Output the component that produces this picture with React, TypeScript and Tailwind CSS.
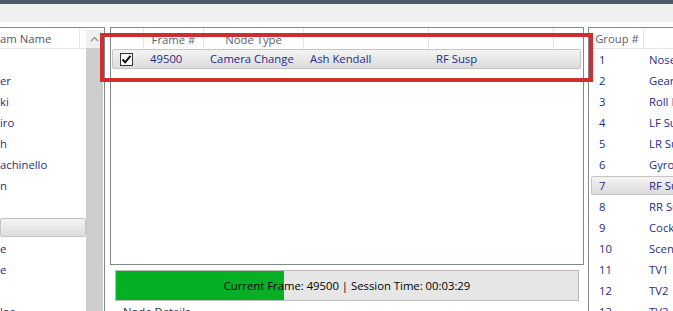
import React from "react";

const teamRows = ["", "er", "ki", "iro", "h", "achinello", "n", "", "", "e", "e", "", "los"];
const selectedTeam = 8;

const groups = [
  ["1", "Nose Cam"],
  ["2", "Gearbox"],
  ["3", "Roll Hoop"],
  ["4", "LF Susp"],
  ["5", "LR Susp"],
  ["6", "Gyro"],
  ["7", "RF Susp"],
  ["8", "RR Susp"],
  ["9", "Cockpit"],
  ["10", "Scenic"],
  ["11", "TV1"],
  ["12", "TV2"],
  ["13", "TV3"],
];
const selectedGroup = 6;

const progress = 36.3; // percent of bar

const selBg = "bg-gradient-to-b from-[#f4f4f4] to-[#dcdcdc] border border-[#c4c4c4] rounded-[2px]";

function CheckBox() {
  return (
    <div className="w-[13px] h-[13px] border border-[#333] bg-white flex items-center justify-center">
      <svg width="11" height="11" viewBox="0 0 11 11">
        <path d="M1.5 5.5 L4.2 8.3 L9.5 1.8" fill="none" stroke="#111" strokeWidth="2" />
      </svg>
    </div>
  );
}

export default function App() {
  return (
    <div className="w-[673px] h-[311px] overflow-hidden bg-white relative font-['Open_Sans',sans-serif] text-[11.3px]">
      <div className="h-[4px] bg-[#4e5968]" />
      <div className="h-[18px] bg-[#f0f0f0]" />
      <div className="h-[5px]" />

      <div className="flex h-[284px]">
        {/* team list */}
        <div className="w-[105px] shrink-0 border-t border-r border-[#828790] pt-px pr-px flex">
          <div className="w-[86px] flex flex-col overflow-hidden">
            <div className="h-[20px] shrink-0 flex border-b border-[#e5e5e5]">
              <div className="w-[80px] pt-[2px] border-r border-[#e5e5e5] flex items-center text-[#4f5666] whitespace-nowrap">
                am Name
              </div>
            </div>
            {teamRows.map((name, i) => (
              <div key={i} className="h-[21px] shrink-0 flex items-center">
                {i === selectedTeam ? (
                  <div className={`w-full h-[19px] ${selBg}`} />
                ) : (
                  <span className="pt-[2px] text-[#1f2d86] whitespace-nowrap">{name}</span>
                )}
              </div>
            ))}
          </div>
          <div className="w-[17px] flex flex-col">
            <div className="h-[18px] mt-px bg-[#f0f0f0] flex items-center justify-center">
              <svg width="9" height="6" viewBox="0 0 9 6">
                <path d="M1 5 L4.5 1.5 L8 5" fill="none" stroke="#8a8a8a" strokeWidth="1.2" />
              </svg>
            </div>
            <div className="flex-1 bg-[#cdcdcd]" />
          </div>
        </div>

        <div className="w-[5px] shrink-0" />

        {/* middle: nodes + progress */}
        <div className="w-[474px] shrink-0 flex flex-col overflow-hidden">
          <div className="h-[238px] shrink-0 border border-[#828790] flex flex-col">
            <div className="h-[21px] flex text-[#5b6272] whitespace-nowrap">
              <div className="w-[33px] border-r border-[#e5e5e5]" />
              <div className="w-[60px] pt-[3px] border-r border-[#e5e5e5] flex items-center justify-center">Frame #</div>
              <div className="w-[100px] pt-[3px] border-r border-[#e5e5e5] flex items-center justify-center">Node Type</div>
              <div className="w-[125px] border-r border-[#e5e5e5]" />
              <div className="w-[125px] border-r border-[#e5e5e5]" />
            </div>
            <div className={`h-[20px] ml-px mr-[2px] flex items-center text-[#1f2d86] whitespace-nowrap ${selBg}`}>
              <div className="w-[32px] pl-[7px]">
                <CheckBox />
              </div>
              <div className="w-[60px] pl-[5px] pt-px">49500</div>
              <div className="w-[100px] pl-[5px] pt-px">Camera Change</div>
              <div className="w-[125px] pl-[5px] pt-px">Ash Kendall</div>
              <div className="w-[125px] pl-[6px] pt-px">RF Susp</div>
            </div>
          </div>

          <div className="mt-[5px] mx-[5px] h-[31px] shrink-0 border border-[#bcbcbc] bg-[#e6e6e6] relative flex items-center justify-center">
            <div className="absolute left-0 top-0 bottom-0 bg-[#06b025]" style={{ width: `${progress}%` }} />
            <span className="relative pt-px text-black whitespace-nowrap">Current Frame: 49500 | Session Time: 00:03:29</span>
          </div>

          <div className="pl-[13px] pt-[3px] shrink-0 text-[#2a2f45]">Node Details</div>
        </div>

        <div className="w-[4px] shrink-0" />

        {/* camera groups */}
        <div className="flex-1 border-t border-l border-[#828790] pt-px pl-[2px] flex flex-col overflow-hidden">
          <div className="h-[20px] shrink-0 flex border-b border-[#e5e5e5] text-[#5b6272] whitespace-nowrap">
            <div className="w-[53px] pt-[2px] border-r border-[#e5e5e5] flex items-center justify-center">Group #</div>
          </div>
          {groups.map(([num, name], i) => (
            <div key={num} className="h-[21px] shrink-0 flex items-center">
              <div
                className={`h-[19px] w-[120px] pt-px flex items-center whitespace-nowrap text-[#1f2d86] ${
                  i === selectedGroup ? selBg : "border border-transparent"
                }`}
              >
                <div className="w-[52px] pl-[7px]">{num}</div>
                <div className="pl-[5px]">{name}</div>
              </div>
            </div>
          ))}
        </div>
      </div>

      {/* annotation */}
      <div className="absolute left-[100px] top-[33px] w-[493px] h-[49px] border-4 border-[#cf2e2e]" />
    </div>
  );
}
